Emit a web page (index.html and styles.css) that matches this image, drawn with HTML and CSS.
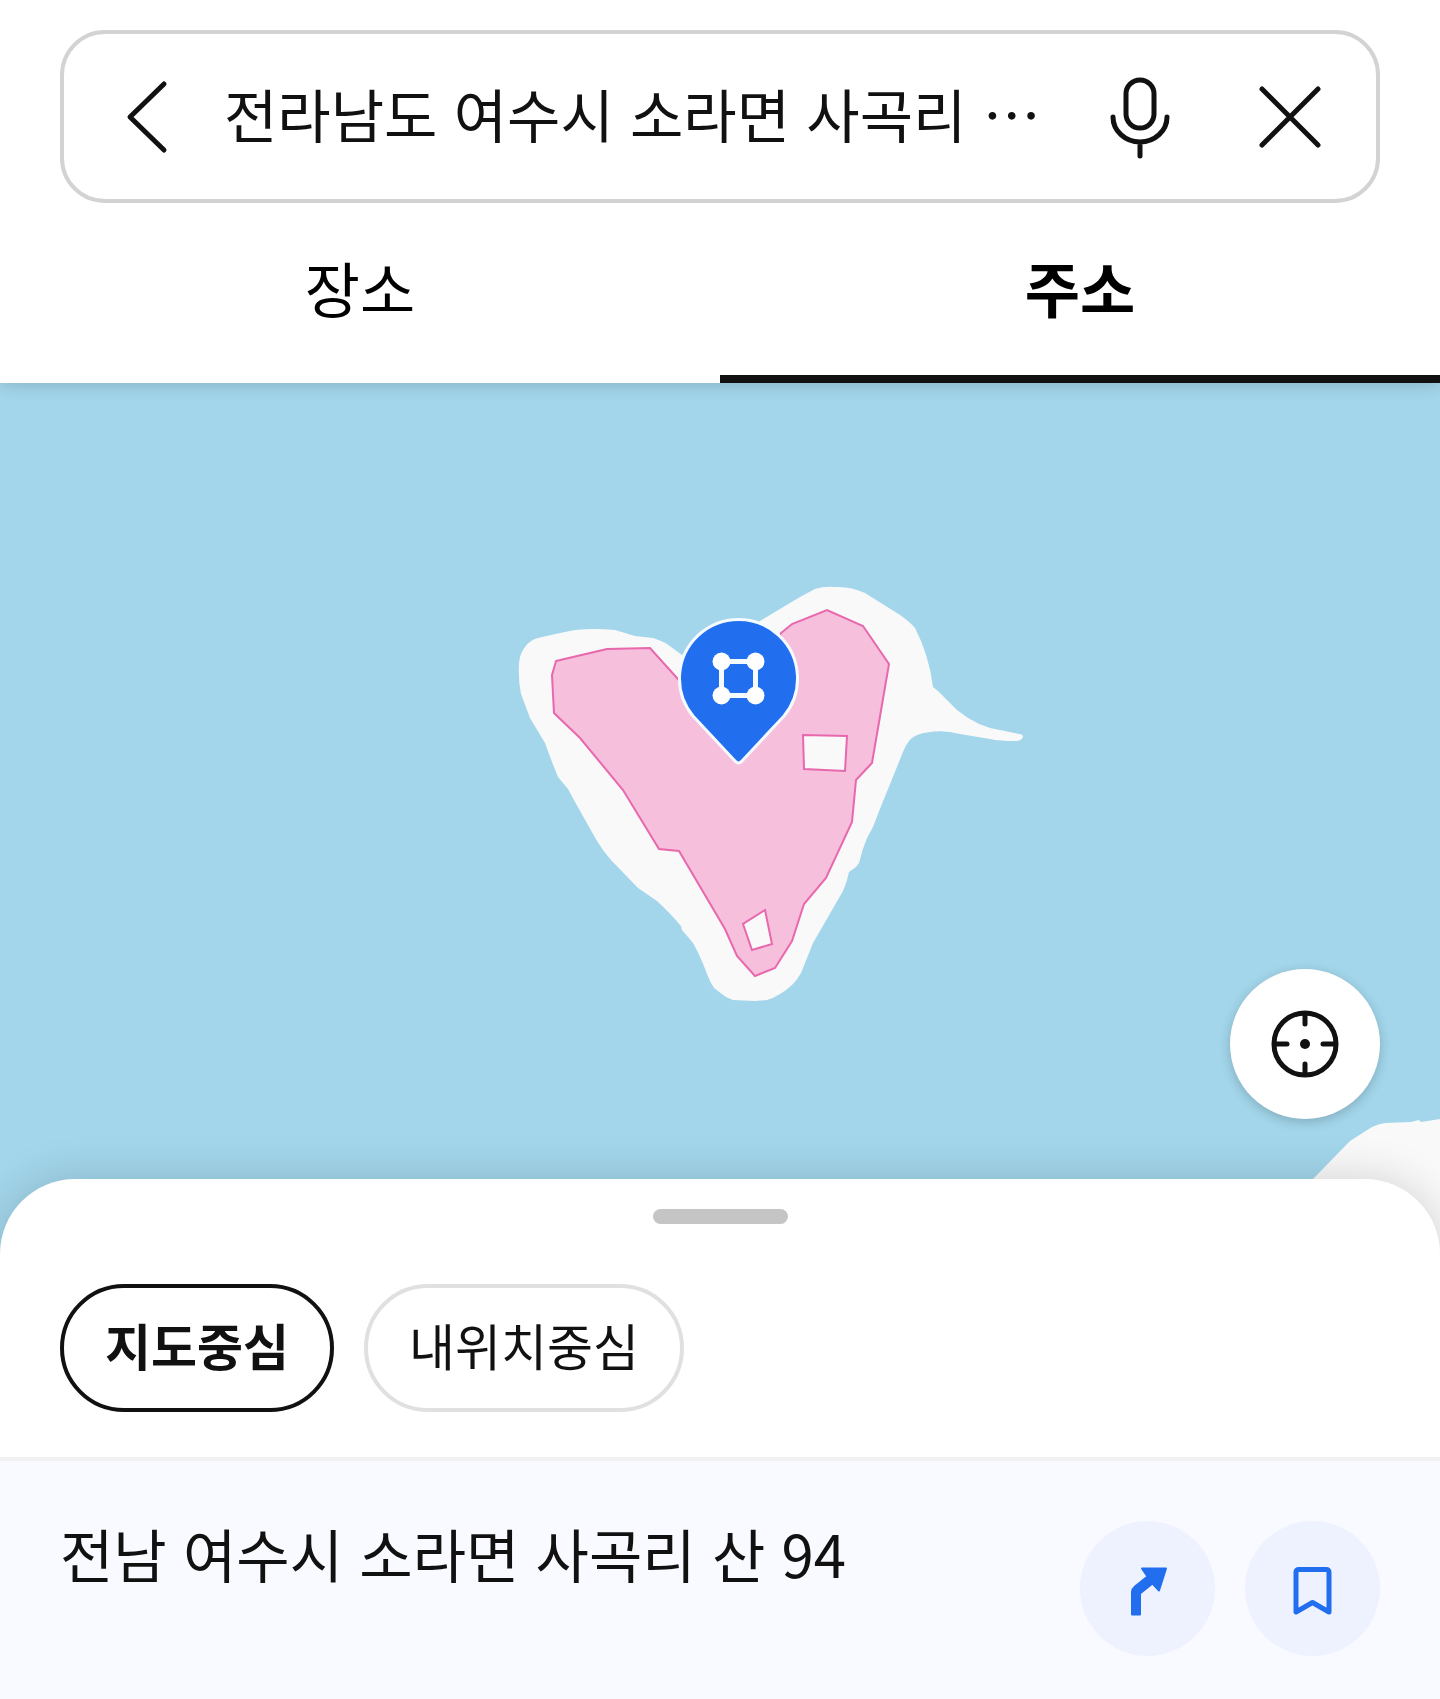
FILE: index.html
```html
<!DOCTYPE html>
<html lang="ko">
<head>
<meta charset="utf-8">
<meta name="viewport" content="width=device-width, initial-scale=1">
<title>주소 검색</title>
<link rel="stylesheet" href="styles.css">
</head>
<body>
<header class="header">
  <form class="search" role="search">
    <button class="icon-button" type="button" aria-label="뒤로">
      <svg viewBox="0 0 90 90"><path d="M62 12 28 45 62 78"/></svg>
    </button>
    <input class="search-input" type="text" aria-label="주소 검색" value="전라남도 여수시 소라면 사곡리 …">
    <div class="search-actions">
      <button class="icon-button" type="button" aria-label="음성 검색">
        <svg viewBox="0 0 90 90"><rect x="31" y="8" width="28" height="48" rx="14"/><path d="M18 45a27 25 0 0 0 54 0M45 71V84"/></svg>
      </button>
      <button class="icon-button" type="button" aria-label="지우기">
        <svg viewBox="0 0 90 90"><path d="M17 17 73 73M73 17 17 73"/></svg>
      </button>
    </div>
  </form>
  <nav class="tabs">
    <a class="tab" href="#place">장소</a>
    <a class="tab tab-active" href="#address" aria-current="page">주소</a>
  </nav>
</header>

<main class="content">
  <section class="map" aria-label="지도">
    <svg class="map-canvas" viewBox="0 383 1440 871" preserveAspectRatio="xMidYMin slice" aria-hidden="true">
      <path class="land" d="M519 663Q520 653 525 647Q530 640 538 638L560 633L575 630Q595 628 615 630L635 636L653 638Q662 641 667 644L682 655L740 650L760 621L800 597L815 589Q824 586 835 587Q850 586 865 593L900 615Q910 622 915 628Q929 655 933 687L938 691L957 710Q978 727 1000 730L1019 734Q1023 734 1023 737Q1021 741 1016 741Q1000 741 990 739L960 734Q938 728 917 735Q911 738 909 741Q905 746 903 752L880 809L891 780L873 827L867 838Q862 850 859 863L856 867L849 872Q847 882 843 891L813 943L801 973Q797 980 792 985Q780 996 767 1000L755 1001L733 1000L726 997L714 988Q710 982 707 974Q700 955 693 943L688 937L682 930L681 926Q671 914 657 901L638 888L611 860Q603 851 597 841L575 802L568 789L558 777L552 762L545 743L530 718L521 694Q518 680 519 663Z"/>
      <path class="land" d="M1250 1242 1313 1179 1350 1141 1372 1127Q1378 1124 1385 1123L1411 1122 1419 1120 1421 1122 1440 1119V1300H1250Z"/>
      <path class="parcel" d="M556 661 607 649 650 648 677 678 738 740 781 633 792 624 827 610 863 626 889 664 872 763 856 780 852 822 826 878 804 904 792 941 775 968 755 976 737 956 725 929 679 851 659 849 623 790 580 738 554 713 552 675ZM803 735 804 769 845 771 847 736ZM765 910 743 924 752 950 772 944Z"/>
      <path class="pin" d="M693 716A59 59 0 1 1 784 716L742 761Q738.500 765 735 761Z"/>
      <rect class="pin-frame" x="721.500" y="661.500" width="34" height="34"/>
      <g class="pin-node"><circle cx="721.500" cy="661.500" r="9"/><circle cx="755.500" cy="661.500" r="9"/><circle cx="721.500" cy="695.500" r="9"/><circle cx="755.500" cy="695.500" r="9"/></g>
    </svg>
    <button class="locate" type="button" aria-label="내 위치">
      <svg viewBox="0 0 150 150"><circle cx="75" cy="75" r="31"/><path d="M75 46V55M75 95V104M46 75H57M93 75H104"/><circle class="dot" cx="75" cy="75" r="5"/></svg>
    </button>
  </section>

  <section class="sheet">
    <div class="handle"></div>
    <div class="chips">
      <button class="chip chip-active" type="button" aria-pressed="true">지도중심</button>
      <button class="chip" type="button" aria-pressed="false">내위치중심</button>
    </div>
    <article class="result">
      <h1 class="address">전남 여수시 소라면 사곡리 산 94</h1>
      <div class="result-actions">
        <button class="round" type="button" aria-label="길찾기">
          <svg viewBox="0 0 135 135"><path class="arrow" d="M52 93.500V71Q52 68 55 65.500L67.500 55.500 62 47.500H86L79 69.500 72.500 62.500 60 72.500V93.500Z"/></svg>
        </button>
        <button class="round" type="button" aria-label="저장">
          <svg viewBox="0 0 135 135"><path class="bookmark" d="M51 91V51.500Q51 48.500 54 48.500H81Q84 48.500 84 51.500V91L67.500 81.500Z"/></svg>
        </button>
      </div>
    </article>
  </section>
</main>
</body>
</html>
```
FILE: styles.css
```css
* { box-sizing: border-box; }

body {
  margin: 0;
  min-height: 100vh;
  display: flex;
  flex-direction: column;
  background: #fff;
  color: #111;
  font-family: "Noto Sans CJK KR", sans-serif;
}

button {
  margin: 0;
  padding: 0;
  border: 0;
  background: none;
  color: inherit;
  font: inherit;
  cursor: pointer;
}

svg { display: block; width: 100%; height: 100%; }

/* Header */
.header {
  position: relative;
  z-index: 1;
  padding-top: 30px;
  background: #fff;
  box-shadow: 0 0 18px rgba(0, 0, 0, 0.2);
}

.search {
  display: flex;
  align-items: center;
  height: 173px;
  margin: 0 60px;
  padding: 0 41px 0 38px;
  border: 4px solid #d3d3d3;
  border-radius: 45px;
}

.icon-button { flex: none; width: 90px; height: 90px; }

.icon-button svg {
  fill: none;
  stroke: #111;
  stroke-width: 5;
  stroke-linecap: round;
  stroke-linejoin: round;
}

.search-input {
  flex: 1;
  min-width: 0;
  height: 100px;
  margin: 0 30px 0 32px;
  padding: 0 0 8px;
  border: 0;
  outline: 0;
  background: none;
  color: inherit;
  font: 400 58px/92px "Noto Sans CJK KR", sans-serif;
}

.search-actions { display: flex; gap: 60px; }

.tabs { display: flex; }

.tab {
  flex: 1;
  height: 180px;
  border-bottom: 8px solid transparent;
  color: #000;
  font-size: 60px;
  line-height: 168px;
  text-align: center;
  text-decoration: none;
}

.tab-active { border-color: #111; font-weight: 700; }

/* Map */
.content { flex: 1; display: flex; flex-direction: column; }

.map {
  position: relative;
  flex: 1;
  min-height: 500px;
  background: #a3d6eb;
}

.map-canvas { position: absolute; inset: 0; }
.land { fill: #f9f9f9; }
.parcel { fill: #f6bfdc; fill-rule: evenodd; stroke: #e868ae; stroke-width: 2; }
.pin { fill: #216eef; stroke: #f5faff; stroke-width: 3; }
.pin-frame { fill: none; stroke: #f5faff; stroke-width: 5; }
.pin-node { fill: #fff; }

.locate {
  position: absolute;
  right: 60px;
  bottom: 135px;
  width: 150px;
  height: 150px;
  border-radius: 50%;
  background: #fff;
  box-shadow: 0 3px 12px rgba(0, 0, 0, 0.2);
}

.locate svg {
  fill: none;
  stroke: #111;
  stroke-width: 5;
  stroke-linecap: round;
}

.locate .dot { fill: #111; stroke: none; }

/* Bottom sheet */
.sheet {
  position: relative;
  margin-top: -75px;
  padding-top: 30px;
  border-radius: 75px 75px 0 0;
  background: #fff;
  box-shadow: 0 0 45px rgba(0, 0, 0, 0.16);
}

.handle {
  width: 135px;
  height: 15px;
  margin: 0 auto;
  border-radius: 8px;
  background: #c5c5c5;
}

.chips { display: flex; gap: 30px; padding: 60px 60px 45px; }

.chip {
  height: 128px;
  padding: 0 41px 8px;
  border: 4px solid #e0e0e0;
  border-radius: 64px;
  font-size: 50px;
  line-height: 112px;
}

.chip-active { border-color: #111; font-weight: 700; }

.result {
  display: flex;
  justify-content: space-between;
  gap: 30px;
  padding: 60px 60px 43px;
  border-top: 4px solid #f1f1f1;
  background: #f9faff;
}

.address { margin: 0; font-size: 58px; font-weight: 400; line-height: 64px; }

.result-actions { display: flex; flex: none; gap: 30px; }

.round {
  width: 135px;
  height: 135px;
  border-radius: 50%;
  background: #eef2ff;
}

.arrow { fill: #216eef; stroke: #216eef; stroke-width: 2; stroke-linejoin: round; }

.bookmark {
  fill: none;
  stroke: #216eef;
  stroke-width: 5;
  stroke-linejoin: round;
}
```
